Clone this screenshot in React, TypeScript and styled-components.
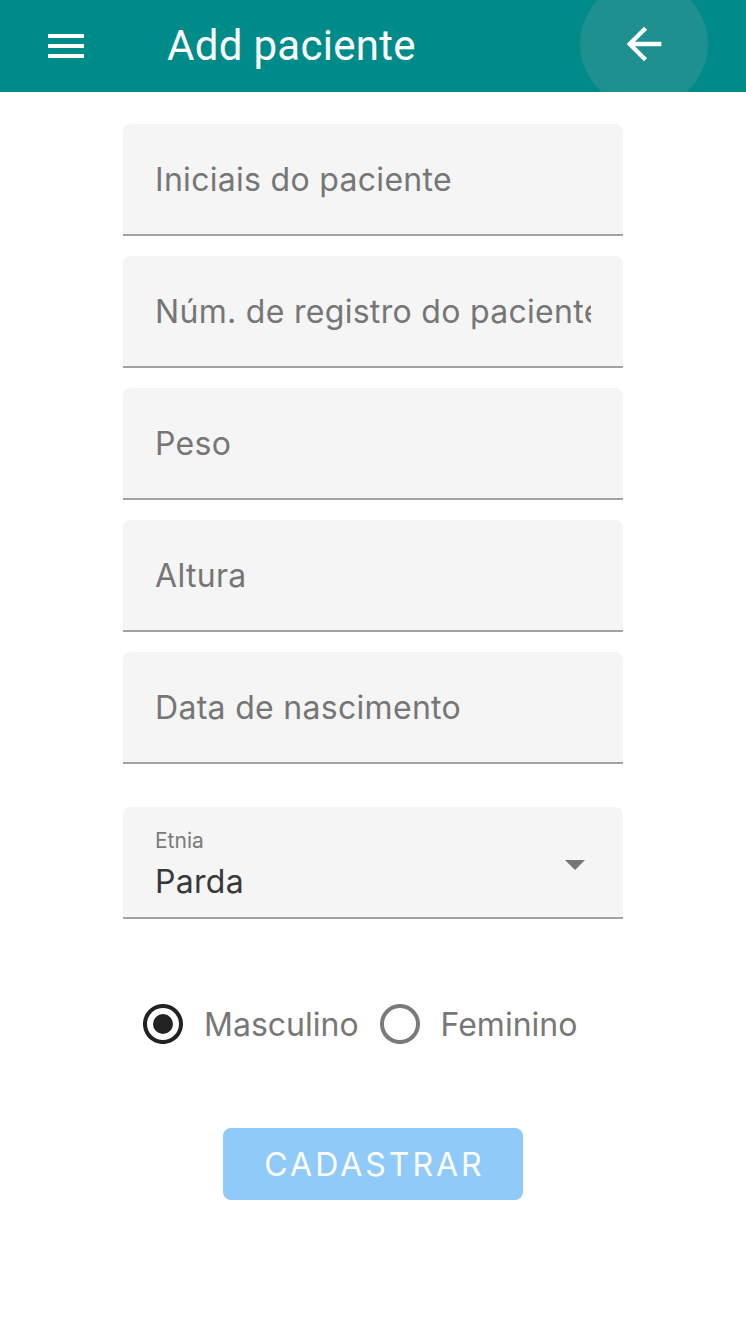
import React from "react";
import styled, { createGlobalStyle } from "styled-components";

const Global = createGlobalStyle`
  html, body { margin: 0; padding: 0; background: #ffffff; }
  body { font-family: Inter, "Noto Sans", sans-serif; }
  * { box-sizing: border-box; }
`;

const Page = styled.div`
  width: 746px;
  min-height: 1322px;
  background: #ffffff;
  display: flex;
  flex-direction: column;
`;

const Header = styled.header`
  position: relative;
  height: 92px;
  background: #008b8b;
  display: flex;
  align-items: center;
  overflow: hidden;
  padding-left: 42px;
`;

const IconButton = styled.button`
  background: none;
  border: none;
  padding: 0;
  margin: 0;
  display: flex;
  align-items: center;
  justify-content: center;
  color: #ffffff;
  cursor: pointer;
`;

const Title = styled.h1`
  margin: -2px 0 0 77px;
  font-family: Roboto, "Liberation Sans", sans-serif;
  font-weight: 400;
  font-size: 42px;
  color: #ffffff;
  letter-spacing: 0.3px;
  flex: 1;
`;

const BackWrap = styled.div`
  position: relative;
  width: 128px;
  height: 128px;
  margin-right: 38px;
  margin-top: -4px;
  display: flex;
  align-items: center;
  justify-content: center;
`;

const Ripple = styled.span`
  position: absolute;
  inset: 0;
  border-radius: 50%;
  background: #1e908f;
`;

const BackIcon = styled.svg`
  position: relative;
  width: 52px;
  height: 52px;
  fill: #ffffff;
`;

const Form = styled.form`
  width: 500px;
  margin: 32px auto 0;
  display: flex;
  flex-direction: column;
`;

const Field = styled.div<{ $gap?: number }>`
  height: 112px;
  margin-bottom: ${(p) => p.$gap ?? 20}px;
  background: #f5f5f5;
  border-radius: 8px 8px 0 0;
  border-bottom: 2px solid #a2a2a2;
  display: flex;
  align-items: center;
  padding: 0 32px;
`;

const Placeholder = styled.div`
  width: 100%;
  overflow: hidden;
  white-space: nowrap;
  font-size: 32px;
  letter-spacing: 0.3px;
  color: #767676;
  line-height: normal;
`;

const SelectField = styled.div`
  position: relative;
  height: 112px;
  background: #f5f5f5;
  border-radius: 8px 8px 0 0;
  border-bottom: 2px solid #a2a2a2;
  padding: 20px 32px 0;
  display: flex;
  flex-direction: column;
`;

const SelectLabel = styled.div`
  font-size: 21px;
  color: #7a7a7a;
  line-height: 28px;
`;

const SelectValue = styled.div`
  font-size: 32px;
  letter-spacing: 0.3px;
  color: #383838;
  line-height: 44px;
  margin-top: 5px;
`;

const Caret = styled.span`
  position: absolute;
  right: 38px;
  top: 53px;
  width: 0;
  height: 0;
  border-left: 10px solid transparent;
  border-right: 10px solid transparent;
  border-top: 10px solid #757575;
`;

const RadioGroup = styled.div`
  display: flex;
  align-items: center;
  padding-left: 20px;
  margin-top: 81px;
  height: 48px;
`;

const RadioOption = styled.label`
  display: flex;
  align-items: center;
  gap: 21px;
  margin-right: 21px;
  cursor: pointer;
`;

const RadioIcon = styled.svg<{ $checked?: boolean }>`
  width: 40px;
  height: 40px;
  fill: ${(p) => (p.$checked ? "#222222" : "#7a7a7a")};
  flex-shrink: 0;
`;

const RadioText = styled.span`
  font-size: 32px;
  color: #777777;
`;

const Submit = styled.button`
  align-self: center;
  margin-top: 80px;
  width: 300px;
  height: 72px;
  border: none;
  border-radius: 8px;
  background: #90caf9;
  color: #ffffff;
  font-family: Inter, "Noto Sans", sans-serif;
  font-size: 32px;
  font-weight: 400;
  letter-spacing: 3px;
  text-transform: uppercase;
  display: flex;
  align-items: center;
  justify-content: center;
  padding: 0 0 0 3px;
`;

function Radio({ checked }: { checked?: boolean }) {
  return (
    <RadioIcon viewBox="2 2 20 20" $checked={checked}>
      <path d="M12 2C6.48 2 2 6.480 2 12s4.48 10 10 10 10-4.48 10-10S17.52 2 12 2zm0 18c-4.42 0-8-3.58-8-8s3.58-8 8-8 8 3.58 8 8-3.58 8-8 8z" />
      {checked && <circle cx="12" cy="12" r="5" />}
    </RadioIcon>
  );
}

const fields = [
  "Iniciais do paciente",
  "Núm. de registro do paciente",
  "Peso",
  "Altura",
  "Data de nascimento",
];

export default function App() {
  return (
    <>
      <Global />
      <Page>
        <Header>
          <IconButton aria-label="menu">
            <svg width="48" height="48" viewBox="0 0 24 24" fill="#ffffff">
              <path d="M3 18h18v-2H3v2zm0-5h18v-2H3v2zm0-7v2h18V6H3z" />
            </svg>
          </IconButton>
          <Title>Add paciente</Title>
          <BackWrap>
            <Ripple />
            <BackIcon viewBox="0 0 24 24">
              <path d="M20 11H7.83l5.59-5.59L12 4l-8 8 8 8 1.41-1.41L7.83 13H20v-2z" />
            </BackIcon>
          </BackWrap>
        </Header>
        <Form onSubmit={(e) => e.preventDefault()}>
          {fields.map((f, i) => (
            <Field key={f} $gap={i === fields.length - 1 ? 43 : 20}>
              <Placeholder>{f}</Placeholder>
            </Field>
          ))}
          <SelectField>
            <SelectLabel>Etnia</SelectLabel>
            <SelectValue>Parda</SelectValue>
            <Caret />
          </SelectField>
          <RadioGroup>
            <RadioOption>
              <Radio checked />
              <RadioText>Masculino</RadioText>
            </RadioOption>
            <RadioOption>
              <Radio />
              <RadioText>Feminino</RadioText>
            </RadioOption>
          </RadioGroup>
          <Submit type="submit">Cadastrar</Submit>
        </Form>
      </Page>
    </>
  );
}
